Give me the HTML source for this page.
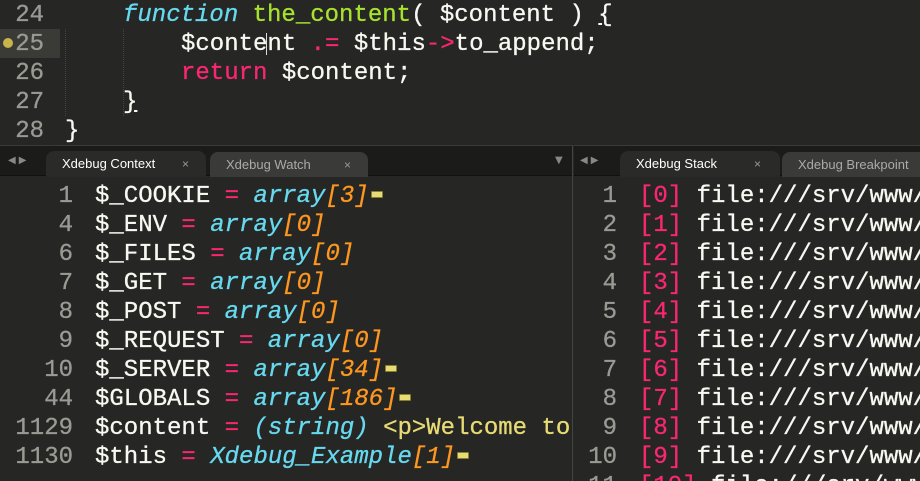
<!DOCTYPE html>
<html><head><style>
*{margin:0;padding:0;box-sizing:border-box}
html,body{width:920px;height:481px;overflow:hidden}
body{background:#262624;font-family:"Liberation Mono",monospace;font-size:24px;color:#f8f8f2;-webkit-text-stroke:0.3px}
#w{position:relative;width:920px;height:481px;overflow:hidden}
.l{position:absolute;height:29px;line-height:29px;white-space:pre;top:1px}
.n{color:#9a9a95;text-align:right}
.k{color:#66d9ef;font-style:italic}
.f{color:#a6e22e}
.p{color:#f92672}
.o{color:#fd971f;font-style:italic}
.s{color:#e6db74}
.d{display:inline-block;width:12px;height:7px;background:#e6db74;border:1px solid #8a7f30;border-radius:1px;vertical-align:middle;margin-left:2px;position:relative;top:-1px}
.bar{position:absolute;top:145px;height:31px;background:#1b1b1a;border-top:1px solid #3a3a38;border-bottom:1px solid #111;-webkit-text-stroke:0}
.tab{position:absolute;top:5px;height:26px;font-family:"Liberation Sans",sans-serif;font-size:13px;line-height:26px;padding-left:16px;border-radius:8px 8px 0 0}
.tab.a{background:#2a2a28;color:#fff}
.tab.i{background:#3a3a38;color:#aaa;top:6px;height:25px}
.x{position:absolute;font-size:12px;color:#999;font-weight:normal}
.arr{position:absolute;top:9px;font-size:10px;color:#888;font-family:"DejaVu Sans",sans-serif;letter-spacing:3px}
</style></head><body><div id="w">
<div style="position:absolute;left:0;top:29px;width:60px;height:29px;background:#3a3a36"></div>
<div style="position:absolute;left:3px;top:38px;width:10px;height:10px;border-radius:50%;background:#c8b44a"></div>
<div style="position:absolute;left:65px;top:29px;height:87px;border-left:1px dotted #444"></div>
<div style="position:absolute;left:123px;top:29px;height:87px;border-left:1px dotted #444"></div>
<div class="l n" style="left:0;width:44px;top:1px">24</div>
<div class="l n" style="left:0;width:44px;top:30px">25</div>
<div class="l n" style="left:0;width:44px;top:59px">26</div>
<div class="l n" style="left:0;width:44px;top:88px">27</div>
<div class="l n" style="left:0;width:44px;top:117px">28</div>
<div class="l" style="left:123px;top:1px"><span class="k">function</span> <span class="f">the_content</span>( $content ) <span style="text-decoration:underline">{</span></div>
<div class="l" style="left:181px;top:30px">$content <span class="p">.=</span> $this<span class="p">-&gt;</span>to_append;</div>
<div style="position:absolute;left:266px;top:33px;width:1px;height:22px;background:#ddd"></div>
<div class="l" style="left:181px;top:59px"><span class="p">return</span> $content;</div>
<div class="l" style="left:123px;top:88px;text-decoration:underline">}</div>
<div class="l" style="left:65px;top:117px">}</div>

<div class="bar" style="left:0;width:573px">
<div class="arr" style="left:8px">◀▶</div>
<div class="tab a" style="left:46px;width:160px">Xdebug Context<span class="x" style="left:136px">×</span></div>
<div class="tab i" style="left:210px;width:158px">Xdebug Watch<span class="x" style="left:134px">×</span></div>
<div class="arr" style="left:555px">▼</div>
</div>
<div class="bar" style="left:574px;width:346px">
<div class="arr" style="left:6px">◀▶</div>
<div class="tab a" style="left:46px;width:160px">Xdebug Stack<span class="x" style="left:134px">×</span></div>
<div class="tab i" style="left:208px;width:160px">Xdebug Breakpoint</div>
</div>
<div style="position:absolute;left:572px;top:145px;width:1px;height:336px;background:#444"></div>

<div class="l n" style="left:0;width:73px;top:182px">1</div>
<div class="l n" style="left:0;width:73px;top:211px">4</div>
<div class="l n" style="left:0;width:73px;top:240px">6</div>
<div class="l n" style="left:0;width:73px;top:269px">7</div>
<div class="l n" style="left:0;width:73px;top:298px">8</div>
<div class="l n" style="left:0;width:73px;top:327px">9</div>
<div class="l n" style="left:0;width:73px;top:356px">10</div>
<div class="l n" style="left:0;width:73px;top:385px">44</div>
<div class="l n" style="left:0;width:73px;top:414px">1129</div>
<div class="l n" style="left:0;width:73px;top:443px">1130</div>
<div class="l" style="left:95px;top:182px">$_COOKIE <span class="p">=</span> <span class="k">array</span><span class="o">[3]</span><span class="d"></span></div>
<div class="l" style="left:95px;top:211px">$_ENV <span class="p">=</span> <span class="k">array</span><span class="o">[0]</span></div>
<div class="l" style="left:95px;top:240px">$_FILES <span class="p">=</span> <span class="k">array</span><span class="o">[0]</span></div>
<div class="l" style="left:95px;top:269px">$_GET <span class="p">=</span> <span class="k">array</span><span class="o">[0]</span></div>
<div class="l" style="left:95px;top:298px">$_POST <span class="p">=</span> <span class="k">array</span><span class="o">[0]</span></div>
<div class="l" style="left:95px;top:327px">$_REQUEST <span class="p">=</span> <span class="k">array</span><span class="o">[0]</span></div>
<div class="l" style="left:95px;top:356px">$_SERVER <span class="p">=</span> <span class="k">array</span><span class="o">[34]</span><span class="d"></span></div>
<div class="l" style="left:95px;top:385px">$GLOBALS <span class="p">=</span> <span class="k">array</span><span class="o">[186]</span><span class="d"></span></div>
<div class="l" style="left:95px;top:414px;width:476px;overflow:hidden">$content <span class="p">=</span> <span class="k">(string)</span> <span class="s">&lt;p&gt;Welcome to</span></div>
<div class="l" style="left:95px;top:443px">$this <span class="p">=</span> <span class="k">Xdebug_Example</span><span class="o">[1]</span><span class="d"></span></div>

<div class="l n" style="left:573px;width:44px;top:182px">1</div>
<div class="l n" style="left:573px;width:44px;top:211px">2</div>
<div class="l n" style="left:573px;width:44px;top:240px">3</div>
<div class="l n" style="left:573px;width:44px;top:269px">4</div>
<div class="l n" style="left:573px;width:44px;top:298px">5</div>
<div class="l n" style="left:573px;width:44px;top:327px">6</div>
<div class="l n" style="left:573px;width:44px;top:356px">7</div>
<div class="l n" style="left:573px;width:44px;top:385px">8</div>
<div class="l n" style="left:573px;width:44px;top:414px">9</div>
<div class="l n" style="left:573px;width:44px;top:443px">10</div>
<div class="l n" style="left:573px;width:44px;top:472px">11</div>
<div class="l" style="left:639px;top:182px"><span class="p">[0]</span> file:///srv/www/</div>
<div class="l" style="left:639px;top:211px"><span class="p">[1]</span> file:///srv/www/</div>
<div class="l" style="left:639px;top:240px"><span class="p">[2]</span> file:///srv/www/</div>
<div class="l" style="left:639px;top:269px"><span class="p">[3]</span> file:///srv/www/</div>
<div class="l" style="left:639px;top:298px"><span class="p">[4]</span> file:///srv/www/</div>
<div class="l" style="left:639px;top:327px"><span class="p">[5]</span> file:///srv/www/</div>
<div class="l" style="left:639px;top:356px"><span class="p">[6]</span> file:///srv/www/</div>
<div class="l" style="left:639px;top:385px"><span class="p">[7]</span> file:///srv/www/</div>
<div class="l" style="left:639px;top:414px"><span class="p">[8]</span> file:///srv/www/</div>
<div class="l" style="left:639px;top:443px"><span class="p">[9]</span> file:///srv/www/</div>
<div class="l" style="left:639px;top:472px"><span class="p">[10]</span> file:///srv/www/</div>
</div></body></html>
